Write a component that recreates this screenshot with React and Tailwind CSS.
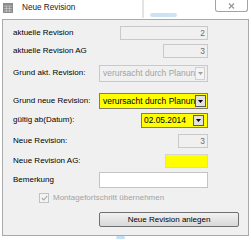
import React from 'react';

function Arrow({ color = '#000' }) {
  return (
    <svg width="5" height="3" viewBox="0 0 5 3">
      <path d="M0 0h5L2.5 3z" fill={color} />
    </svg>
  );
}

function Row({ label, top, children }) {
  return (
    <div className={`flex items-center h-[18px] ${top}`}>
      <span className="text-black leading-none">{label}</span>
      <div className="ml-auto">{children}</div>
    </div>
  );
}

function ReadOnlyBox({ width, value }) {
  return (
    <div className={`${width} h-[14px] border border-[#c9c9c9] bg-[#f0f0f0] flex items-center justify-end pr-[2px] text-[#6d6d6d] text-[8.4px] leading-none`}>
      {value}
    </div>
  );
}

export default function App() {
  return (
    <div className="w-[251px] h-[240px] bg-white overflow-hidden relative font-['Liberation_Sans',Arial,sans-serif] text-[8px]">
      <div className="h-[19px] flex items-start relative">
        <svg className="ml-[3px] mt-[3px]" width="10" height="10" viewBox="0 0 10 10">
          <rect x="0" y="0" width="10" height="10" fill="#8c8c8c" />
          <path d="M1 3h8M1 5.5h8M1 8h8M3.5 3v6M6.5 3v6" stroke="#c4c4c4" strokeWidth="0.8" />
        </svg>
        <span className="ml-[9px] mt-[4px] text-[#1a1a1a] text-[8.2px] leading-none">Neue Revision</span>
        <div className="absolute left-[142px] top-0 w-[2px] h-[18px] bg-[#e4e4e4]" />
        <div className="absolute left-[150px] top-[13px] w-[27px] h-[4px] rounded-full bg-[#b9d6f2] opacity-70" />
        <div className="ml-auto mr-[3px] w-[33px] h-[12px] border border-t-0 border-[#a3a3a3] rounded-b-[3px] bg-white flex items-center justify-center">
          <svg width="7" height="6" viewBox="0 0 7 6">
            <path d="M1 0.5l5 5M6 0.5l-5 5" stroke="#9a9a9a" strokeWidth="1.4" />
          </svg>
        </div>
      </div>

      <div className="ml-[2px] w-[247px] h-[217px] border border-[#a9a9a9] bg-[#f0f0f0]">
        <div className="ml-[10px] w-[195px]">
          <Row label="aktuelle Revision" top="mt-[4px]">
            <ReadOnlyBox width="w-[88px]" value="2" />
          </Row>
          <Row label="aktuelle Revision AG" top="">
            <ReadOnlyBox width="w-[45px]" value="3" />
          </Row>
          <Row label="Grund akt. Revision:" top="mt-[4px]">
            <div className="relative w-[109px] h-[17px] border border-[#c9c9c9] bg-[#f0f0f0] flex items-center pl-[3px] text-[#a3a3a3] text-[8.5px] leading-none overflow-hidden">
              <span className="whitespace-nowrap">verursacht durch Planung</span>
              <div className="absolute right-[2px] top-[1px] w-[10px] h-[13px] border border-[#d0d0d0] bg-[#f4f4f4] flex items-center justify-center">
                <Arrow color="#a0a0a0" />
              </div>
            </div>
          </Row>
          <Row label="Grund neue Revision:" top="mt-[10px]">
            <div className="relative w-[109px] h-[16px] border border-[#808060] bg-[#ffff00] flex items-center pl-[3px] text-black text-[8.5px] leading-none overflow-hidden">
              <span className="whitespace-nowrap">verursacht durch Planung</span>
              <div className="absolute right-[1px] top-[1px] w-[11px] h-[12px] border border-[#5a5a5a] bg-[#e2e2e2] flex items-center justify-center">
                <Arrow />
              </div>
            </div>
          </Row>
          <Row label="gültig ab(Datum):" top="mt-[1px]">
            <div className="relative w-[67px] h-[15px] border border-[#808060] bg-[#ffff00] flex items-center pl-[2px] text-black text-[8.4px] leading-none">
              <span className="whitespace-nowrap">02.05.2014</span>
              <div className="absolute right-[3px] top-[1px] w-[11px] h-[11px] border border-[#5a5a5a] bg-[#e2e2e2] flex items-center justify-center">
                <Arrow />
              </div>
            </div>
          </Row>
          <Row label="Neue Revision:" top="mt-[3px]">
            <ReadOnlyBox width="w-[30px]" value="3" />
          </Row>
          <Row label="Neue Revision AG:" top="mt-[2px]">
            <div className="w-[43px] h-[14px] border border-[#d6d6d6] bg-[#ffff00]" />
          </Row>
          <Row label="Bemerkung" top="mt-[1px]">
            <div className="w-[109px] h-[16px] border border-[#c4c4c4] bg-white" />
          </Row>
          <div className="flex items-center h-[18px] pl-[26px]">
            <div className="w-[10px] h-[10px] border border-[#c2c2c2] bg-[#f4f4f4] flex items-center justify-center">
              <svg width="7" height="6" viewBox="0 0 7 6">
                <path d="M0.8 3l2 2L6.2 0.8" stroke="#a8a8a8" strokeWidth="1.1" fill="none" />
              </svg>
            </div>
            <span className="ml-[4px] text-[#a3a3a3] leading-none">Montagefortschritt übernehmen</span>
          </div>
        </div>
        <button className="mt-[5px] ml-[96px] w-[140px] h-[15px] border border-[#707070] rounded-[2px] bg-gradient-to-b from-[#f2f2f2] to-[#d8d8d8] text-black text-[8px] leading-none flex items-center justify-center">
          Neue Revision anlegen
        </button>
      </div>
      <div className="absolute left-[116px] top-[236px] w-[9px] h-[3px] bg-[#c5dff5] rounded-full" />
    </div>
  );
}
